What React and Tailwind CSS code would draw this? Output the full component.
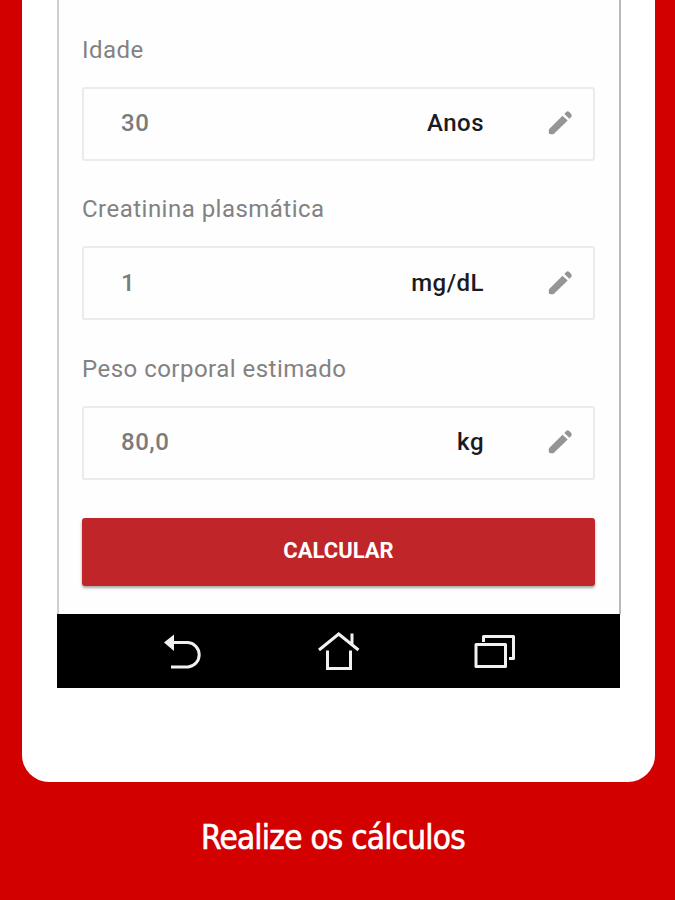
import React from 'react';

const fields = [
  { label: 'Idade', value: '30', unit: 'Anos' },
  { label: 'Creatinina plasmática', value: '1', unit: 'mg/dL' },
  { label: 'Peso corporal estimado', value: '80,0', unit: 'kg' },
];

function PencilIcon() {
  return (
    <svg className="h-8 w-8" viewBox="0 0 32 32" fill="#959595">
      <path d="M5.200 22L18.500 8.700L23.700 13.500L10 26.800Q9.500 27.300 8.800 27.300H6.500Q4.800 27.300 4.800 25.600V23.200Q4.800 22.400 5.200 22ZM20.300 6.900L22.200 5Q23.700 3.600 25.200 5L27.200 7Q28.500 8.400 27.200 9.900L25.300 11.800Z" />
    </svg>
  );
}

function Field({ label, value, unit }) {
  return (
    <div className="h-[159.5px]">
      <div className="h-[51px] text-[24px] leading-[28px] tracking-[0.48px] whitespace-nowrap text-[#828282]">{label}</div>
      <div className="flex h-[74px] items-center rounded-[3px] border-2 border-[#ebebeb] pb-[1px] pl-[37px] pr-[17px] text-[24px] font-medium tracking-[0.5px]">
        <span className="text-[#7b7b7b]">{value}</span>
        <span className="ml-auto mr-[60px] text-[#1b1b1f]">{unit}</span>
        <PencilIcon />
      </div>
    </div>
  );
}

function NavBar() {
  return (
    <div className="h-[74px] w-[563px] bg-black">
      <svg className="h-[74px] w-[563px]" viewBox="57 614 563 74" fill="none" stroke="#f1f1f1" strokeWidth="3">
        {/* Back */}
        <path d="M172 642.5H188A12.3 12.3 0 0 1 188 667H171" />
        <path d="M164 642.5L174 634.5V651Z" fill="#f1f1f1" stroke="none" />
        {/* Home */}
        <path d="M319 650L338.7 634L358.5 650M352 633.5V644M327.5 650.5V668.5H350.5V650.5" />
        {/* Recent apps */}
        <path strokeLinejoin="round" d="M476 644.5H505.500V666.500H476ZM483.500 642V636.500H513.500V658.500H509" />
      </svg>
    </div>
  );
}

export default function App() {
  return (
    <div className="h-[900px] w-[675px] overflow-hidden bg-[#d30000] font-[Roboto,sans-serif]">
      <div className="ml-[22px] h-[782px] w-[633px] rounded-b-[27px] bg-white pl-[35px]">
        <div className="h-[614px] w-[564px] border-l-2 border-r-2 border-l-[#cfcfcf] border-r-[#b9b9b9] bg-[#fefefe] pl-[23px] pr-[24px] pt-[35.5px]">
          {fields.map((field) => (
            <Field key={field.label} {...field} />
          ))}
          <button className="mt-[3.5px] block h-[68px] w-full rounded-[3px] bg-[#c0252a] pb-[2px] text-[22px] font-bold text-white shadow-[0_2px_3px_rgba(0,0,0,0.35)]">
            CALCULAR
          </button>
        </div>
        <NavBar />
      </div>
      <p className="mt-[36px] pr-[9px] text-center font-['DejaVu_Sans_Condensed','DejaVu_Sans',sans-serif] text-[33px] leading-[40px] tracking-[-0.75px] text-white [-webkit-text-stroke:0.6px_white]">
        Realize os cálculos
      </p>
    </div>
  );
}
